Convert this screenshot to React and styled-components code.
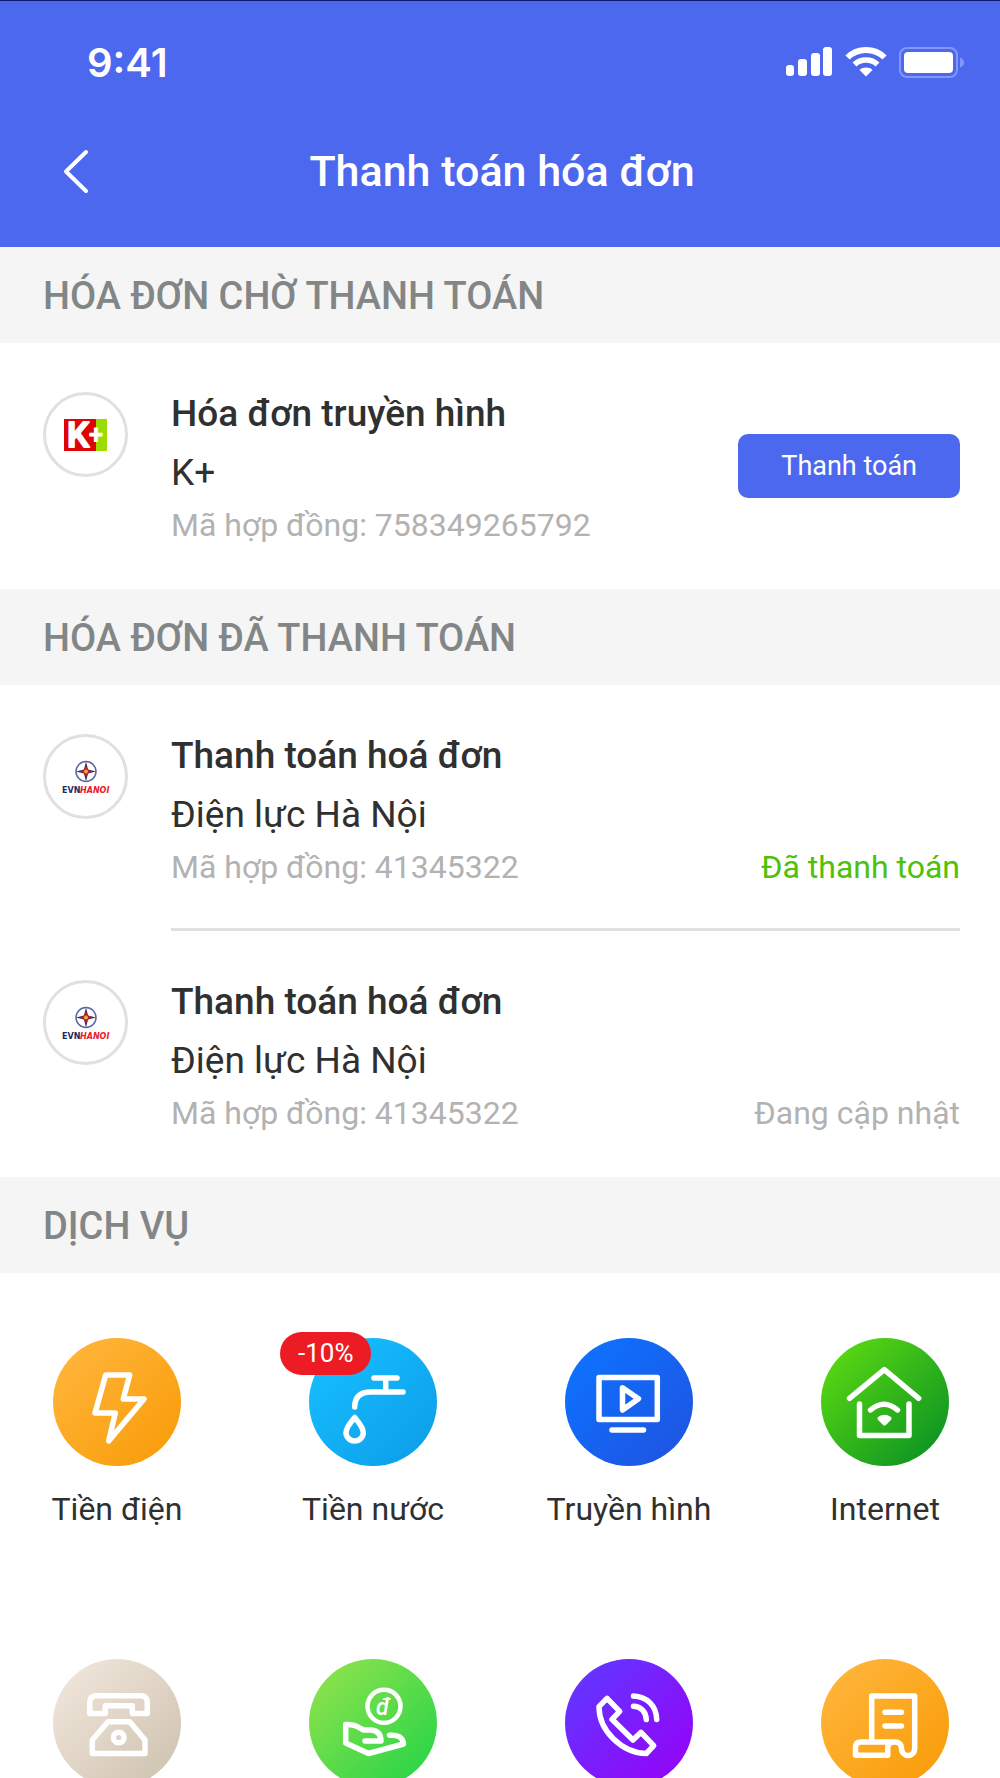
import React from 'react'
import styled, { createGlobalStyle } from 'styled-components'

const GlobalStyle = createGlobalStyle`
  * {
    box-sizing: border-box;
  }

  body {
    margin: 0;
    background: #fff;
    color: #303030;
    font-family: Roboto, "Noto Sans", sans-serif;
  }

  h1, h2, h3, p, ul {
    margin: 0;
    padding: 0;
  }

  button {
    padding: 0;
    border: 0;
    background: none;
    color: inherit;
    font: inherit;
    cursor: pointer;
  }
`

const Page = styled.div`
  height: 100vh;
  overflow: hidden;
`

const Header = styled.header`
  border-top: 1px solid #0f1a6b;
  padding-bottom: 28px;
  background: #4c68ef;
  color: #fff;
`

const StatusBar = styled.div`
  display: flex;
  align-items: center;
  justify-content: space-between;
  height: 122px;
  padding: 0 35px 0 87px;
`

const Time = styled.span`
  font-family: Inter, sans-serif;
  font-size: 40px;
  font-weight: 600;
`

const StatusIcons = styled.div`
  display: flex;
  align-items: center;
  gap: 12px;
`

const NavBar = styled.div`
  display: grid;
  grid-template-columns: 1fr auto 1fr;
  align-items: center;
  height: 96px;
  padding: 0 54px 0 58px;
`

const BackButton = styled.button`
  justify-self: start;
  display: flex;
`

const Title = styled.h1`
  font-size: 43px;
  font-weight: 500;
  line-height: 50px;
`

const SectionTitle = styled.h2`
  padding: 2px 43px 0;
  background: #f5f5f5;
  color: #838686;
  font-size: 38px;
  font-weight: 500;
  line-height: 94px;
`

const Bill = styled.article`
  display: flex;
  gap: 43px;
  padding: 0 40px 0 43px;
`

const Avatar = styled.div`
  display: flex;
  flex: none;
  align-items: center;
  justify-content: center;
  width: 85px;
  height: 85px;
  margin-top: 49px;
  border: 3px solid #e0e0e0;
  border-radius: 50%;
`

const BillBody = styled.div`
  display: flex;
  flex: 1;
  justify-content: space-between;
  padding: 43px 0 ${(props) => (props.$divided ? '40px' : '43px')};
  border-bottom: ${(props) => (props.$divided ? '3px solid #e0e0e0' : '0')};
`

const BillTitle = styled.h3`
  font-size: 37px;
  font-weight: 500;
  line-height: 56px;
`

const Provider = styled.p`
  font-size: 37px;
  line-height: 62px;
`

const Contract = styled.p`
  color: #b2b2b2;
  font-size: 32px;
  line-height: 42px;
`

const Status = styled.p`
  align-self: flex-end;
  color: ${(props) => (props.$paid ? '#4fc108' : '#b2b2b2')};
  font-size: 32px;
  line-height: 42px;
`

const PayButton = styled.button`
  align-self: center;
  height: 64px;
  padding: 0 43px;
  border-radius: 10px;
  background: #4c68ef;
  color: #fff;
  font-size: 27px;
`

const Services = styled.ul`
  display: grid;
  grid-template-columns: repeat(4, 168px);
  justify-content: space-between;
  row-gap: 128px;
  padding: 65px 31px 0 33px;
  list-style: none;
`

const Service = styled.button`
  display: flex;
  flex-direction: column;
  align-items: center;
  gap: 21px;
  width: 100%;
  font-size: 32px;
  line-height: 44px;
  white-space: nowrap;
`

const Disc = styled.span`
  position: relative;
  width: 128px;
  height: 128px;
  border-radius: 50%;
  background: linear-gradient(135deg, ${(props) => props.$from} 10%, ${(props) => props.$to} 90%);

  svg {
    display: block;
  }
`

const Badge = styled.span`
  position: absolute;
  top: -6px;
  left: -29px;
  padding: 0 18px;
  border-radius: 22px;
  background: #ed1c24;
  color: #fff;
  font-size: 26px;
  line-height: 43px;
`

const SignalIcon = () => (
  <svg width="48" height="30" viewBox="0 0 48 30" fill="#fff" aria-hidden="true">
    <rect x="1" y="18" width="8" height="11" rx="3" />
    <rect x="13" y="12" width="9" height="17" rx="3" />
    <rect x="26" y="6" width="9" height="23" rx="3" />
    <rect x="38" y="0" width="9" height="29" rx="3" />
  </svg>
)

const WifiIcon = () => (
  <svg width="42" height="30" viewBox="0 0 42 30" fill="none" stroke="#fff" aria-hidden="true">
    <path d="M2.500 10.500C12.500 0.500 29.500 0.500 39.500 10.500" strokeWidth="6" />
    <path d="M9.500 17.500C15.500 11.500 26.500 11.500 32.500 17.500" strokeWidth="5.500" />
    <path d="M14.500 23C18 19.800 24 19.800 27.500 23L21 29.500Z" fill="#fff" stroke="none" />
  </svg>
)

const BatteryIcon = () => (
  <svg width="66" height="31" viewBox="0 0 66 31" aria-hidden="true">
    <rect x="1" y="1" width="57" height="29" rx="7" fill="none" stroke="#8496fa" strokeWidth="2" />
    <rect x="5" y="5" width="49" height="21" rx="4" fill="#fff" />
    <path d="M61 10.500Q65 12 65 15.500T61 20.500Z" fill="#8496fa" />
  </svg>
)

const BackIcon = () => (
  <svg width="36" height="46" viewBox="0 0 36 46" fill="none" stroke="#fff" strokeWidth="4" strokeLinecap="round" strokeLinejoin="round" aria-hidden="true">
    <path d="M28 4L8 23.500L28 43" />
  </svg>
)

const KPlusLogo = () => (
  <svg width="55" height="52" viewBox="-6 -10 55 52" role="img" aria-label="K+">
    <rect width="43" height="32" fill="#9bdc05" />
    <rect width="32" height="32" fill="#dd0505" />
    <g fill="#fff" stroke="#fff" strokeLinejoin="round" fontFamily="Roboto, sans-serif">
      <text x="3" y="28" fontSize="35" fontWeight="500" strokeWidth="2">K</text>
      <text x="25" y="24" fontSize="25" fontWeight="500">+</text>
    </g>
  </svg>
)

const EvnLogo = () => (
  <svg width="52" height="40" viewBox="0 0 52 40" role="img" aria-label="EVN Hanoi">
    <circle cx="26" cy="14.500" r="10" fill="none" stroke="#5a679c" strokeWidth="1.500" />
    <path d="M26 4.500L28 12.500L36 14.500L28 16.500L26 24.500L24 16.500L16 14.500L24 12.500Z" fill="#2a2c66" />
    <path d="M26 8L28 12.500L32.500 14.500L28 16.500L26 21L24 16.500L19.500 14.500L24 12.500Z" fill="#b0202c" />
    <circle cx="26" cy="14.500" r="2" fill="#f7a32b" />
    <g fontFamily="DejaVu Sans, sans-serif" fontSize="8" fontWeight="700">
      <text x="2" y="36" fill="#1c2a63">EVN</text>
      <text x="20" y="36" fill="#e8202a" fontStyle="italic">HANOI</text>
    </g>
  </svg>
)

// all service icons are drawn on the 128px disc
const icons = {
  bolt: <path d="M52.700 37H76.700L70.300 61H91L55.700 103L62.300 75H42Z" />,
  tap: (
    <>
      <path d="M65 40H88M76.700 40V54M94 54H62Q45.700 54 45.700 69" />
      <path d="M45.700 79.500C42 84 37 89.500 37 94.500A8.600 8.400 0 0 0 54.300 94.500C54.300 89.500 49.500 84 45.700 79.500Z" />
    </>
  ),
  tv: <path d="M34 39.500H92.300V81.500H34ZM57.500 49.700L73.500 60.700L57.500 72ZM47 92H78.500" />,
  home: (
    <>
      <path d="M28.500 60.300L63.300 31.700L97.700 60.300M38.500 66V97.500H88V66M49.500 72Q63 60.500 76.500 72" />
      <path d="M58.500 80.500Q63.500 77 68.500 80.500L63.500 85.500Z" fill="#fff" strokeWidth="4" />
    </>
  ),
  phone: (
    <>
      <path d="M36.700 54.500V43.500Q36.700 36.700 43.500 36.700H87.500Q94.300 36.700 94.300 43.500V54.500H79.300V46.700H52.300V54.500Z" />
      <path d="M39.300 94.500V81L55 62.700H76.700L92 81V94.500Z" />
      <circle cx="65.700" cy="78.500" r="5.300" />
    </>
  ),
  hand: (
    <>
      <circle cx="75" cy="47.300" r="16.500" strokeWidth="4.500" />
      <text x="67" y="56" fill="#fff" stroke="none" fontSize="23" fontWeight="500" fontStyle="italic" fontFamily="Roboto, sans-serif">đ</text>
      <path d="M80.500 76.300C88 75.500 94 78 94.500 85L59.500 94.500L36.700 84V65.500C45 65 48 67.500 54.500 71H62Q72 72 72 82H56" />
    </>
  ),
  call: (
    <>
      <path d="M42 39.300L54.700 52.300L47 60.300L68 81L76 73.300L88.700 86.700L81.300 94.500C57 94 34 72 34 47.700Z" />
      <path d="M68.500 37C82 37.500 91.500 47 91.700 60.500M68.500 47.300C76 47.500 81 53 81.300 60.500" />
    </>
  ),
  receipt: (
    <>
      <path d="M50.700 82V37H93.700V89C93.700 99 80.500 99 80.500 89Q80 83 74 83H40Q34.500 83 34.500 88.500V96.300H66.700V89Q67 83 73 83" />
      <path d="M64 53.300H80.500M64 67H80.500" />
    </>
  ),
}

const paidBills = [
  { id: 1, status: 'Đã thanh toán', paid: true },
  { id: 2, status: 'Đang cập nhật', paid: false },
]

const services = [
  { icon: 'bolt', label: 'Tiền điện', from: '#ffb53a', to: '#f99d0b' },
  { icon: 'tap', label: 'Tiền nước', from: '#16beff', to: '#0e9fea', badge: '-10%' },
  { icon: 'tv', label: 'Truyền hình', from: '#0d72ff', to: '#1e55e2' },
  { icon: 'home', label: 'Internet', from: '#5ad813', to: '#0c9422' },
  { icon: 'phone', name: 'Điện thoại cố định', from: '#efe5d9', to: '#d0c4b2' },
  { icon: 'hand', name: 'Vay tiêu dùng', from: '#8be24c', to: '#2bd548' },
  { icon: 'call', name: 'Di động trả sau', from: '#6236ff', to: '#9404f8' },
  { icon: 'receipt', name: 'Hóa đơn khác', from: '#ffb53a', to: '#f99d0b' },
]

const BillRow = ({ logo, title, provider, contract, divided, children }) => (
  <Bill>
    <Avatar>{logo}</Avatar>
    <BillBody $divided={divided}>
      <div>
        <BillTitle>{title}</BillTitle>
        <Provider>{provider}</Provider>
        <Contract>Mã hợp đồng: {contract}</Contract>
      </div>
      {children}
    </BillBody>
  </Bill>
)

const App = () => {
  return (
    <Page>
      <GlobalStyle />
      <Header>
        <StatusBar>
          <Time>9:41</Time>
          <StatusIcons>
            <SignalIcon />
            <WifiIcon />
            <BatteryIcon />
          </StatusIcons>
        </StatusBar>
        <NavBar>
          <BackButton type="button" aria-label="Quay lại">
            <BackIcon />
          </BackButton>
          <Title>Thanh toán hóa đơn</Title>
        </NavBar>
      </Header>

      <main>
        <SectionTitle>HÓA ĐƠN CHỜ THANH TOÁN</SectionTitle>
        <BillRow logo={<KPlusLogo />} title="Hóa đơn truyền hình" provider="K+" contract="758349265792">
          <PayButton type="button">Thanh toán</PayButton>
        </BillRow>

        <SectionTitle>HÓA ĐƠN ĐÃ THANH TOÁN</SectionTitle>
        {paidBills.map((bill, index) => (
          <BillRow
            key={bill.id}
            logo={<EvnLogo />}
            title="Thanh toán hoá đơn"
            provider="Điện lực Hà Nội"
            contract="41345322"
            divided={index < paidBills.length - 1}
          >
            <Status $paid={bill.paid}>{bill.status}</Status>
          </BillRow>
        ))}

        <SectionTitle>DỊCH VỤ</SectionTitle>
        <Services>
          {services.map((service) => (
            <li key={service.icon}>
              <Service type="button" aria-label={service.name}>
                <Disc $from={service.from} $to={service.to}>
                  <svg width="128" height="128" viewBox="0 0 128 128" fill="none" stroke="#fff" strokeWidth="5.500" strokeLinecap="round" strokeLinejoin="round" aria-hidden="true">
                    {icons[service.icon]}
                  </svg>
                  {service.badge && <Badge>{service.badge}</Badge>}
                </Disc>
                {service.label}
              </Service>
            </li>
          ))}
        </Services>
      </main>
    </Page>
  )
}

export default App
